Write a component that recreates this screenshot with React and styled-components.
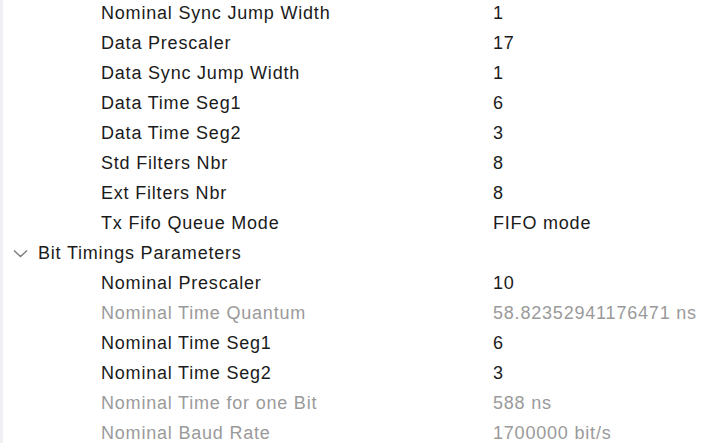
import React from "react";
import styled, { createGlobalStyle } from "styled-components";

const Global = createGlobalStyle`
  html, body { margin: 0; padding: 0; background: #ffffff; }
  body { font-family: "Liberation Sans", Arial, sans-serif; overflow: hidden; }
`;

const Panel = styled.div`
  display: flex;
  width: 709px;
  height: 443px;
  overflow: hidden;
  background: #ffffff;
`;

const Gutter = styled.div`
  width: 3px;
  flex: none;
  background: #eef0f3;
`;

const Tree = styled.div`
  flex: 1;
  display: flex;
  flex-direction: column;
  margin-top: -2px;
`;

const Row = styled.div`
  flex: none;
  display: grid;
  grid-template-columns: 490px 1fr;
  height: 30px;
  align-items: center;
  font-size: 18px;
  letter-spacing: 0.8px;
  color: ${(p) => (p.$muted ? "#9a9a9a" : "#1b1b1b")};
  white-space: nowrap;
`;

const Label = styled.div`
  display: flex;
  align-items: center;
  padding-left: ${(p) => (p.$group ? "10px" : "98px")};
  gap: 10px;
`;

const Value = styled.div``;

const Chevron = () => (
  <svg width="15" height="9" viewBox="0 0 15 9" fill="none">
    <path d="M1 1.5 L7.5 7.5 L14 1.5" stroke="#808080" strokeWidth="1.5" />
  </svg>
);

const rows = [
  ["Nominal Sync Jump Width", "1"],
  ["Data Prescaler", "17"],
  ["Data Sync Jump Width", "1"],
  ["Data Time Seg1", "6"],
  ["Data Time Seg2", "3"],
  ["Std Filters Nbr", "8"],
  ["Ext Filters Nbr", "8"],
  ["Tx Fifo Queue Mode", "FIFO mode"],
];

const timing = [
  ["Nominal Prescaler", "10"],
  ["Nominal Time Quantum", "58.82352941176471 ns", true],
  ["Nominal Time Seg1", "6"],
  ["Nominal Time Seg2", "3"],
  ["Nominal Time for one Bit", "588 ns", true],
  ["Nominal Baud Rate", "1700000 bit/s", true],
];

export default function App() {
  return (
    <>
      <Global />
      <Panel>
        <Gutter />
        <Tree>
          {rows.map(([l, v]) => (
            <Row key={l}>
              <Label>{l}</Label>
              <Value>{v}</Value>
            </Row>
          ))}
          <Row>
            <Label $group>
              <Chevron />
              Bit Timings Parameters
            </Label>
            <Value />
          </Row>
          {timing.map(([l, v, m]) => (
            <Row key={l} $muted={m}>
              <Label>{l}</Label>
              <Value>{v}</Value>
            </Row>
          ))}
        </Tree>
      </Panel>
    </>
  );
}
